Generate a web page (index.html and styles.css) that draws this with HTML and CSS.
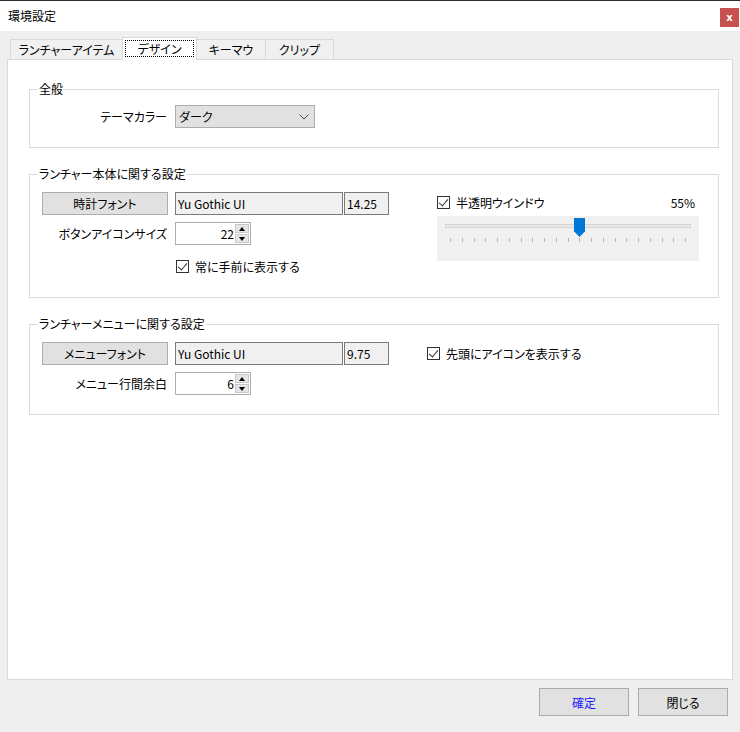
FILE: index.html
```html
<!DOCTYPE html>
<html lang="ja">
  <head>
    <meta charset="UTF-8" />
    <title>環境設定</title>
    <link rel="stylesheet" href="styles.css">
  </head>

  <body>
    <div class="window">
      <header class="titlebar">
        <span class="title">環境設定</span>
        <span class="close">x</span>
      </header>

      <div class="client">
        <nav class="tabs">
          <span class="tab tab1">ランチャーアイテム</span>
          <span class="tab valgt"><span class="focus">デザイン</span></span>
          <span class="tab tab3">キーマウ</span>
          <span class="tab tab4">クリップ</span>
        </nav>

        <main class="panel">
          <fieldset class="group g1">
            <legend>全般</legend>
            <div class="row">
              <label class="lbl">テーマカラー</label>
              <div class="combo">
                <span>ダーク</span>
                <svg width="10" height="6" viewBox="0 0 10 6"><path d="M0.5 0.5 L5 5 L9.5 0.5" fill="none" stroke="#444" stroke-width="1"/></svg>
              </div>
            </div>
          </fieldset>

          <fieldset class="group g2">
            <legend>ランチャー本体に関する設定</legend>
            <div class="cols">
              <div class="left">
                <div class="row">
                  <button class="knap">時計フォント</button>
                  <span class="field name">Yu Gothic UI</span>
                  <span class="field size">14.25</span>
                </div>
                <div class="row r2">
                  <label class="lbl">ボタンアイコンサイズ</label>
                  <div class="num">
                    <span class="val">22</span>
                    <span class="spin"><i class="up"></i><i class="down"></i></span>
                  </div>
                </div>
                <div class="row r3">
                  <span class="check"></span>
                  <span>常に手前に表示する</span>
                </div>
              </div>
              <div class="right">
                <div class="checkrow">
                  <span class="check"></span>
                  <span>半透明ウインドウ</span>
                  <span class="pct">55%</span>
                </div>
                <div class="track">
                  <div class="rail"></div>
                  <div class="thumb"></div>
                  <div class="ticks"></div>
                </div>
              </div>
            </div>
          </fieldset>

          <fieldset class="group g3">
            <legend>ランチャーメニューに関する設定</legend>
            <div class="cols">
              <div class="left">
                <div class="row">
                  <button class="knap">メニューフォント</button>
                  <span class="field name">Yu Gothic UI</span>
                  <span class="field size">9.75</span>
                </div>
                <div class="row r2">
                  <label class="lbl">メニュー行間余白</label>
                  <div class="num">
                    <span class="val">6</span>
                    <span class="spin"><i class="up"></i><i class="down"></i></span>
                  </div>
                </div>
              </div>
              <div class="right r-menu">
                <div class="checkrow">
                  <span class="check"></span>
                  <span>先頭にアイコンを表示する</span>
                </div>
              </div>
            </div>
          </fieldset>
        </main>

        <footer class="footer">
          <button class="knap big ok">確定</button>
          <button class="knap big">閉じる</button>
        </footer>
      </div>
    </div>
  </body>
</html>
```

FILE: styles.css
```css
* {
  box-sizing: border-box;
}

body {
  margin: 0;
  font-family: "Noto Sans CJK JP", "Noto Sans", sans-serif;
  font-size: 12px;
  font-feature-settings: "palt";
  color: #000;
  background: #efefef;
}

.window {
  width: 740px;
  height: 732px;
  display: flex;
  flex-direction: column;
  background: #efefef;
}

/* title bar */
.titlebar {
  height: 31px;
  background: #fff;
  border-top: 1px solid #2b2b2b;
  display: flex;
  align-items: center;
  justify-content: space-between;
  padding: 0 1px 0 8px;
}

.title {
  line-height: 16px;
  margin-top: -1px;
}

.close {
  width: 19px;
  height: 19px;
  margin-top: 2px;
  background: #c75050;
  color: #fff;
  font-family: "DejaVu Sans", sans-serif;
  font-weight: bold;
  font-size: 10px;
  display: flex;
  align-items: center;
  justify-content: center;
}

.client {
  flex: 1;
  display: flex;
  flex-direction: column;
  padding-top: 6px;
}

/* tabs */
.tabs {
  display: flex;
  align-items: flex-end;
  height: 22px;
  padding-left: 10px;
  position: relative;
  z-index: 1;
}

.tab {
  height: 20px;
  border: 1px solid #d9d9d9;
  border-bottom: none;
  background: #f0f0f0;
  display: flex;
  align-items: center;
  justify-content: center;
  line-height: 14px;
}

.tab1 {
  width: 112px;
  border-right: none;
}

.valgt {
  width: 75px;
  height: 23px;
  margin-bottom: -1px;
  background: #fff;
  padding: 2px 2px 3px;
  align-items: stretch;
}

.focus {
  flex: 1;
  border: 1px dotted #000;
  display: flex;
  align-items: center;
  justify-content: center;
  line-height: 14px;
}

.tab3 {
  width: 69px;
  border-left: none;
}

.tab4 {
  width: 68px;
  border-left: none;
}

/* panel */
.panel {
  margin-left: 7px;
  width: 726px;
  height: 621px;
  background: #fff;
  border: 1px solid #d9d9d9;
  padding: 21px 13px 0 21px;
}

.group {
  margin: 0;
  padding: 0;
  border: 1px solid #dcdcdc;
  min-width: 0;
}

legend {
  margin-left: 8px;
  padding: 0 1px;
  line-height: 16px;
}

.g1 {
  padding: 8px 0 19px;
}

.g2 {
  margin-top: 18px;
  padding: 10px 0 23px;
}

.g3 {
  margin-top: 18px;
  padding: 10px 0 19px;
}

.row {
  display: flex;
  align-items: center;
  height: 23px;
}

.lbl {
  width: 138px;
  text-align: right;
  padding-right: 1px;
  margin-right: 7px;
}

.combo {
  width: 140px;
  height: 23px;
  background: #e1e1e1;
  border: 1px solid #adadad;
  display: flex;
  align-items: center;
  justify-content: space-between;
  padding: 0 5px 0 3px;
}

.cols {
  display: flex;
}

.left {
  width: 359px;
}

.right {
  margin-left: 48px;
  width: 262px;
  padding-top: 2px;
}

.r-menu {
  margin-left: 38px;
  padding-top: 3px;
}

.knap {
  font: inherit;
  font-feature-settings: "palt";
  color: #000;
  background: #e1e1e1;
  border: 1px solid #adadad;
  padding: 0;
  height: 23px;
}

.row .knap {
  width: 126px;
  margin-left: 12px;
  margin-right: 7px;
}

.field {
  height: 23px;
  background: #f0f0f0;
  border: 1px solid #7a7a7a;
  display: flex;
  align-items: center;
  padding-left: 2px;
}

.name {
  width: 168px;
}

.size {
  width: 45px;
  margin-left: 1px;
}

.r2 {
  margin-top: 7px;
}

.num {
  width: 76px;
  height: 23px;
  border: 1px solid #adadad;
  background: #fff;
  display: flex;
  align-items: center;
  justify-content: flex-end;
  padding: 1px;
}

.val {
  padding-right: 1px;
}

.spin {
  width: 14px;
  height: 19px;
  display: flex;
  flex-direction: column;
  gap: 1px;
}

.spin i {
  flex: 1;
  background: #e5e5e5;
  border: 1px solid #c8c8c8;
  display: flex;
  align-items: center;
  justify-content: center;
}

.spin i::after {
  content: "";
  border-left: 3px solid transparent;
  border-right: 3px solid transparent;
}

.up::after {
  border-bottom: 4px solid #000;
}

.down::after {
  border-top: 4px solid #000;
}

.r3 {
  margin-top: 13px;
  padding-left: 146px;
  height: 16px;
  gap: 6px;
}

.check {
  width: 13px;
  height: 13px;
  border: 1px solid #333;
  background: #fff;
  position: relative;
  flex: none;
}

.check::after {
  content: "";
  position: absolute;
  left: 3px;
  top: 0px;
  width: 4px;
  height: 8px;
  border-right: 1px solid #333;
  border-bottom: 1px solid #333;
  transform: rotate(40deg);
}

.checkrow {
  display: flex;
  align-items: center;
  gap: 6px;
  height: 16px;
}

.pct {
  margin-left: auto;
  padding-right: 4px;
}

/* trackbar */
.track {
  margin-top: 6px;
  height: 45px;
  background: #f0f0f0;
  position: relative;
}

.rail {
  position: absolute;
  left: 8px;
  right: 8px;
  top: 8px;
  height: 4px;
  background: #e7e7e7;
  border: 1px solid #d6d6d6;
}

.thumb {
  position: absolute;
  left: 137px;
  top: 2px;
  width: 11px;
  height: 19px;
  background: #0078d7;
  clip-path: polygon(0 0, 100% 0, 100% 70%, 50% 100%, 0 70%);
}

.ticks {
  position: absolute;
  left: 13px;
  top: 22px;
  width: 237px;
  height: 4px;
  background: repeating-linear-gradient(
    to right,
    #b4b4b4 0,
    #b4b4b4 1px,
    transparent 1px,
    transparent 11.75px
  );
}

/* footer */
.footer {
  display: flex;
  justify-content: flex-end;
  gap: 9px;
  padding: 8px 12px 0 0;
}

.big {
  width: 90px;
  height: 28px;
}

.ok {
  color: #1a1aff;
}
```
